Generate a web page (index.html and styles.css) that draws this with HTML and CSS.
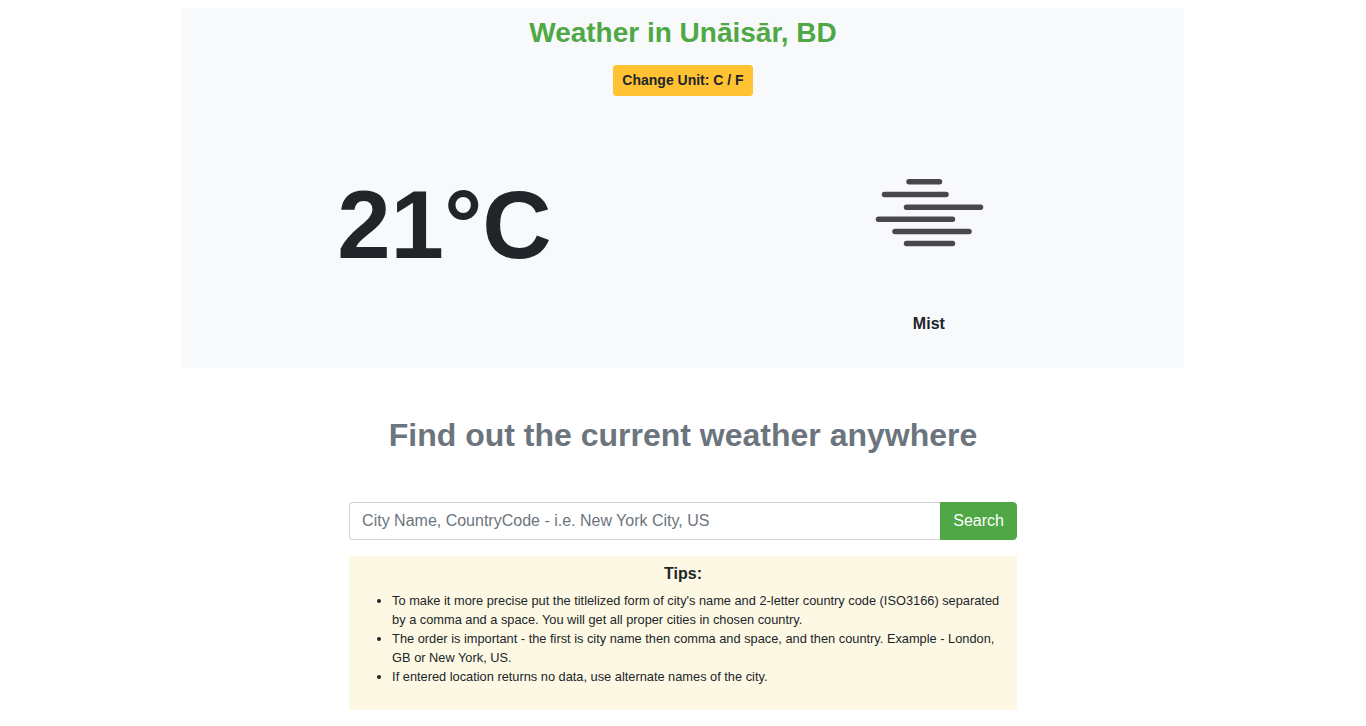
FILE: index.html
```html
<!DOCTYPE html>
<html lang="en">
<head>
  <meta charset="utf-8">
  <meta name="viewport" content="width=device-width, initial-scale=1">
  <title>Weather</title>
  <link rel="stylesheet" href="styles.css">
</head>
<body>
  <main class="page">
    <section class="weather">
      <h1 class="weather-title">Weather in Unāisār, BD</h1>
      <button class="unit-button" type="button">Change Unit: C / F</button>
      <div class="conditions">
        <p class="temperature">21°C</p>
        <figure class="sky">
          <svg class="sky-icon" viewBox="0 0 200 200" aria-hidden="true">
            <path d="M80 69.800H110.500M55.500 82.500H117M77.500 95.200H151.500M49.500 107.200H123.500M66 119.500H140M77.500 131.600H123.500"/>
          </svg>
          <figcaption class="sky-label">Mist</figcaption>
        </figure>
      </div>
    </section>

    <section class="finder">
      <h2 class="finder-title">Find out the current weather anywhere</h2>
      <form class="search">
        <input class="search-input" type="text" aria-label="City" placeholder="City Name, CountryCode - i.e. New York City, US">
        <button class="search-button" type="submit">Search</button>
      </form>
      <div class="tips">
        <h3 class="tips-title">Tips:</h3>
        <ul class="tips-list">
          <li>To make it more precise put the titlelized form of city's name and 2-letter country code (ISO3166) separated by a comma and a space. You will get all proper cities in chosen country.</li>
          <li>The order is important - the first is city name then comma and space, and then country. Example - London, GB or New York, US.</li>
          <li>If entered location returns no data, use alternate names of the city.</li>
        </ul>
      </div>
    </section>
  </main>
</body>
</html>
```
FILE: styles.css
```css
* {
  box-sizing: border-box;
}

body {
  margin: 0;
  background: #fff;
  color: #212529;
  font-family: "Liberation Sans", Arial, sans-serif;
  font-size: 16px;
  line-height: 24px;
}

h1, h2, h3, p, figure {
  margin: 0;
}

.page {
  width: calc(100% * 11 / 15);
  margin: 0 auto;
  padding: 8px 0 16px;
}

.weather {
  padding: 8px 0 32px;
  background: #f8f9fb;
  text-align: center;
}

.weather-title {
  margin-bottom: 15px;
  color: #4fa845;
  font-size: 28px;
  line-height: 34px;
}

.unit-button {
  display: block;
  margin: 0 auto 16px;
  padding: 4px 8px;
  border: 1px solid #ffc233;
  border-radius: 3px;
  background: #ffc233;
  color: #212529;
  font: bold 14px/21px "Liberation Sans", Arial, sans-serif;
}

.conditions {
  display: flex;
  flex-wrap: wrap;
  align-items: center;
  justify-content: space-between;
  padding: 0 155px;
}

.temperature {
  font-size: 96px;
  font-weight: bold;
  line-height: 115px;
}

.sky-icon {
  display: block;
  width: 200px;
  height: 200px;
  fill: none;
  stroke: #48484a;
  stroke-width: 5.5;
  stroke-linecap: round;
}

.sky-label {
  font-weight: bold;
}

.finder {
  width: calc(100% * 2 / 3);
  margin: 48px auto 0;
}

.finder-title {
  margin-bottom: 48px;
  color: #6c757d;
  font-size: 32px;
  line-height: 38px;
  text-align: center;
}

.search {
  display: flex;
  margin-bottom: 16px;
}

.search-input {
  flex: 1;
  min-width: 0;
  height: 38px;
  padding: 6px 12px;
  border: 1px solid #ced4da;
  border-right: 0;
  border-radius: 4px 0 0 4px;
  background: #fff;
  color: #495057;
  font: 16px/24px "Liberation Sans", Arial, sans-serif;
}

.search-input::placeholder {
  color: #6c757d;
}

.search-button {
  padding: 6px 12px;
  border: 1px solid #4fa845;
  border-radius: 0 4px 4px 0;
  background: #4fa845;
  color: #fff;
  font: 16px/24px "Liberation Sans", Arial, sans-serif;
}

.tips {
  padding: 8px 16px 24px 3px;
  background: #fcf8e3;
}

.tips-title {
  margin-bottom: 8px;
  padding-left: 13px;
  font-size: 16px;
  line-height: 19px;
  text-align: center;
}

.tips-list {
  margin: 0;
  padding-left: 40px;
  font-size: 80%;
  line-height: 19px;
}
```
